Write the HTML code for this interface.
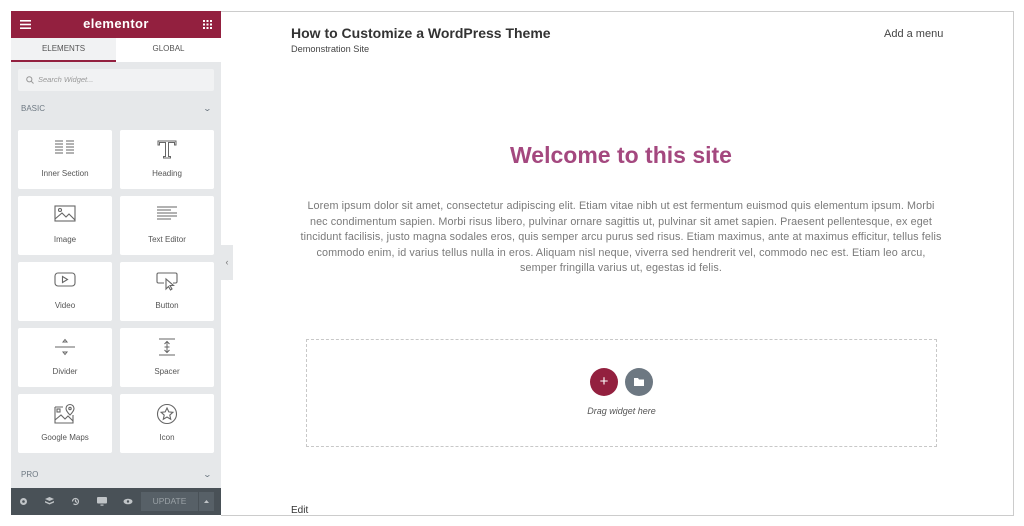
<!DOCTYPE html>
<html><head><meta charset="utf-8"><style>
*{box-sizing:border-box;margin:0;padding:0}
body{width:1024px;height:526px;background:#fff;position:relative;overflow:hidden;font-family:"Liberation Sans",sans-serif}
.panel{position:absolute;left:11px;top:11px;width:210px;height:504px;background:#e6e8ea}
.hdr{position:absolute;left:0;top:0;width:210px;height:27px;background:#93203f;color:#fff}
.hdr .logo{position:absolute;left:0;width:210px;text-align:center;top:5px;font-weight:bold;font-size:13px;letter-spacing:.4px}
.tabs{position:absolute;top:27px;left:0;width:210px;height:24px;background:#fff;font-size:8px;color:#555}
.tabs div{position:absolute;top:0;height:24px;line-height:22px;text-align:center}
.search{position:absolute;left:7px;top:58px;width:196px;height:22px;background:#f1f2f3;border-radius:2px;font-size:7.5px;font-style:italic;color:#999;padding:6px 0 0 20px}
.sec{position:absolute;left:10px;font-size:8px;color:#6d7882}
.chev{position:absolute;right:10px;font-size:8px;color:#6d7882;transform:scaleX(1.4)}
.card{position:absolute;width:94px;height:59px;background:#fff;border-radius:2px;text-align:center;font-size:8px;color:#555}
.card svg{position:absolute;left:36px;top:9px}
.card span{position:absolute;left:0;right:0;top:39px}
.bar{position:absolute;left:0;top:477px;width:210px;height:27px;background:#495157}
.bar svg{position:absolute;top:9px}
.upd{position:absolute;left:130px;top:4px;width:57px;height:19px;background:#576067;color:#9aa1a6;font-size:8.5px;text-align:center;line-height:19px}
.tog{position:absolute;left:188px;top:4px;width:15px;height:19px;background:#576067}
.page{position:absolute;left:221px;top:11px;width:793px;height:505px;border:1px solid #ccc;border-left:none;background:#fff}
.col{position:absolute;left:221px;top:245px;width:12px;height:35px;background:#e6e8ea;color:#777;font-size:9px;text-align:center;line-height:35px}
p.lorem{position:absolute;left:271px;width:700px;top:199px;text-align:center;font-size:10.8px;line-height:15.5px;color:#7a7a7a;letter-spacing:.1px}
</style></head><body>
<div class="panel">
 <div class="hdr">
  <svg style="position:absolute;left:9px;top:9px" width="11" height="9"><rect y="0" width="11" height="1.6" fill="#fff"/><rect y="3.7" width="11" height="1.6" fill="#fff"/><rect y="7.4" width="11" height="1.6" fill="#fff"/></svg>
  <div class="logo">elementor</div>
  <svg style="position:absolute;left:192px;top:9px" width="9" height="9" fill="#fff"><rect x="0" y="0" width="2" height="2"/><rect x="3.5" y="0" width="2" height="2"/><rect x="7" y="0" width="2" height="2"/><rect x="0" y="3.5" width="2" height="2"/><rect x="3.5" y="3.5" width="2" height="2"/><rect x="7" y="3.5" width="2" height="2"/><rect x="0" y="7" width="2" height="2"/><rect x="3.5" y="7" width="2" height="2"/><rect x="7" y="7" width="2" height="2"/></svg>
 </div>
 <div class="tabs">
  <div style="left:0;width:105px;background:#f1f2f3;border-bottom:2px solid #93203f">ELEMENTS</div>
  <div style="left:105px;width:105px">GLOBAL</div>
 </div>
 <div class="search"><svg style="position:absolute;left:8px;top:7px" width="8" height="8"><circle cx="3.3" cy="3.3" r="2.6" fill="none" stroke="#999" stroke-width="1"/><line x1="5.2" y1="5.2" x2="7.5" y2="7.5" stroke="#999"/></svg>Search Widget...</div>
 <div class="sec" style="top:93px">BASIC</div><div class="chev" style="top:93px">&#8964;</div>

 <div class="card" style="left:7px;top:119px"><svg width="22" height="16" stroke="#666" stroke-width="1"><path d="M1 2h8M1 5h8M1 8h8M1 11h8M1 14h8M12 2h8M12 5h8M12 8h8M12 11h8M12 14h8"/></svg><span>Inner Section</span></div>
 <div class="card" style="left:109px;top:119px"><svg width="22" height="20" stroke="#666" stroke-width="1" fill="none"><path d="M2 2h18v4h-1.5v-2.5h-6v14h2v1.5h-7v-1.5h2v-14h-6v2.5h-1.5z"/></svg><span>Heading</span></div>

 <div class="card" style="left:7px;top:185px"><svg width="22" height="18" stroke="#666" stroke-width="1.1" fill="none"><rect x="1" y="1" width="20" height="15"/><circle cx="6" cy="5" r="1.5"/><path d="M1 14l7-6 4 4 3-3 6 6"/></svg><span>Image</span></div>
 <div class="card" style="left:109px;top:185px"><svg width="22" height="18" stroke="#666" stroke-width="1"><path d="M1 2h20M1 5h14M1 8h20M1 11h20M1 14h14"/></svg><span>Text Editor</span></div>

 <div class="card" style="left:7px;top:251px"><svg width="22" height="18" stroke="#666" stroke-width="1.1" fill="none"><rect x="1" y="2" width="20" height="13" rx="3"/><path d="M8.5 5.5v6l5-3z"/></svg><span>Video</span></div>
 <div class="card" style="left:109px;top:251px"><svg width="22" height="20" stroke="#666" stroke-width="1.1" fill="none"><path d="M8 12H2.5a1.5 1.5 0 0 1-1.5-1.5v-7A1.5 1.5 0 0 1 2.5 2h17A1.5 1.5 0 0 1 21 3.5v7a1.5 1.5 0 0 1-1.5 1.5H17"/><path d="M10 8l0 10 2.5-2.5 2 3.5 1.5-1-2-3.5h3.5z"/></svg><span>Button</span></div>

 <div class="card" style="left:7px;top:317px"><svg width="22" height="20" stroke="#666" stroke-width="1" fill="none"><path d="M9 5l2-2.5 2 2.5zM1 10h20M9 15l2 2.5 2-2.5z"/></svg><span>Divider</span></div>
 <div class="card" style="left:109px;top:317px"><svg width="22" height="20" stroke="#666" stroke-width="1" fill="none"><path d="M3 2h16M3 18h16M11 4v12M8.5 7l2.5-2.5 2.5 2.5M8.5 13l2.5 2.5 2.5-2.5M8.5 10h5"/></svg><span>Spacer</span></div>

 <div class="card" style="left:7px;top:383px"><svg width="22" height="22" stroke="#666" stroke-width="1.1" fill="none"><path d="M1 4h8M1 4v16h18v-8M1 17l6-5 4 4 3-3 5 5"/><path d="M16 12s-4-4-4-6.5a4 4 0 0 1 8 0C20 8 16 12 16 12z"/><circle cx="16" cy="5.5" r="1.2"/><rect x="3" y="6" width="3" height="3"/></svg><span>Google Maps</span></div>
 <div class="card" style="left:109px;top:383px"><svg width="22" height="22" stroke="#666" stroke-width="1.1" fill="none"><circle cx="11" cy="11" r="9.5"/><path d="M11 5l1.8 3.9 4.1.4-3.1 2.8.9 4.1-3.7-2.2-3.7 2.2.9-4.1-3.1-2.8 4.1-.4z"/></svg><span>Icon</span></div>

 <div class="sec" style="top:459px">PRO</div><div class="chev" style="top:459px">&#8964;</div>
 <div class="bar">
  <svg style="left:8px" width="9" height="9"><circle cx="4.5" cy="4.5" r="3.5" fill="#c0c4c7"/><circle cx="4.5" cy="4.5" r="1.3" fill="#495157"/></svg>
  <svg style="left:34px" width="9" height="9" fill="#c0c4c7"><path d="M4.5 0l4.5 2-4.5 2-4.5-2z M0 4l4.5 2 4.5-2v1.5l-4.5 2-4.5-2z"/></svg>
  <svg style="left:60px" width="9" height="9" fill="none" stroke="#c0c4c7" stroke-width="1.2"><path d="M1.5 4.5a3 3 0 1 1 1 2.2M4.5 2.5v2l1.5 1"/></svg>
  <svg style="left:86px" width="10" height="9" fill="#c0c4c7"><rect x="0" y="0" width="10" height="6.5" rx="1"/><rect x="3.5" y="7.5" width="3" height="1.2"/></svg>
  <svg style="left:112px" width="10" height="9"><ellipse cx="5" cy="4.5" rx="4.5" ry="2.8" fill="#c0c4c7"/><circle cx="5" cy="4.5" r="1.2" fill="#495157"/></svg>
  <div class="upd">UPDATE</div><div class="tog"><svg style="position:absolute;left:5px;top:8px" width="5" height="3"><path d="M0 3l2.5-3 2.5 3z" fill="#c0c4c7"/></svg></div>
 </div>
</div>
<div class="page"></div>
<div class="col">&#8249;</div>
<div style="position:absolute;left:291px;top:25px;font-size:14px;font-weight:bold;color:#333">How to Customize a WordPress Theme</div>
<div style="position:absolute;left:291px;top:44px;font-size:9.2px;color:#444">Demonstration Site</div>
<div style="position:absolute;left:884px;top:28px;font-size:11px;color:#444">Add a menu</div>
<div style="position:absolute;left:271px;width:700px;top:142px;text-align:center;font-size:23px;font-weight:bold;color:#a4487f">Welcome to this site</div>
<p class="lorem">Lorem ipsum dolor sit amet, consectetur adipiscing elit. Etiam vitae nibh ut est fermentum euismod quis elementum ipsum. Morbi<br>nec condimentum sapien. Morbi risus libero, pulvinar ornare sagittis ut, pulvinar sit amet sapien. Praesent pellentesque, ex eget<br>tincidunt facilisis, justo magna sodales eros, quis semper arcu purus sed risus. Etiam maximus, ante at maximus efficitur, tellus felis<br>commodo enim, id varius tellus nulla in eros. Aliquam nisl neque, viverra sed hendrerit vel, commodo nec est. Etiam leo arcu,<br>semper fringilla varius ut, egestas id felis.</p>
<div style="position:absolute;left:306px;top:339px;width:631px;height:108px;border:1px dashed #c8c8c8"></div>
<div style="position:absolute;left:590px;top:368px;width:28px;height:28px;border-radius:50%;background:#93203f;color:#fff;text-align:center;line-height:27px;font-size:15px">+</div>
<div style="position:absolute;left:625px;top:368px;width:28px;height:28px;border-radius:50%;background:#6d7882"><svg style="position:absolute;left:9px;top:9px" width="10" height="9" fill="#fff"><path d="M0 1h4l1 1.5h5V9H0z"/></svg></div>
<div style="position:absolute;left:306px;width:631px;top:406px;text-align:center;font-size:9px;font-style:italic;color:#555">Drag widget here</div>
<div style="position:absolute;left:291px;top:505px;font-size:10px;color:#333">Edit</div>
</body></html>
